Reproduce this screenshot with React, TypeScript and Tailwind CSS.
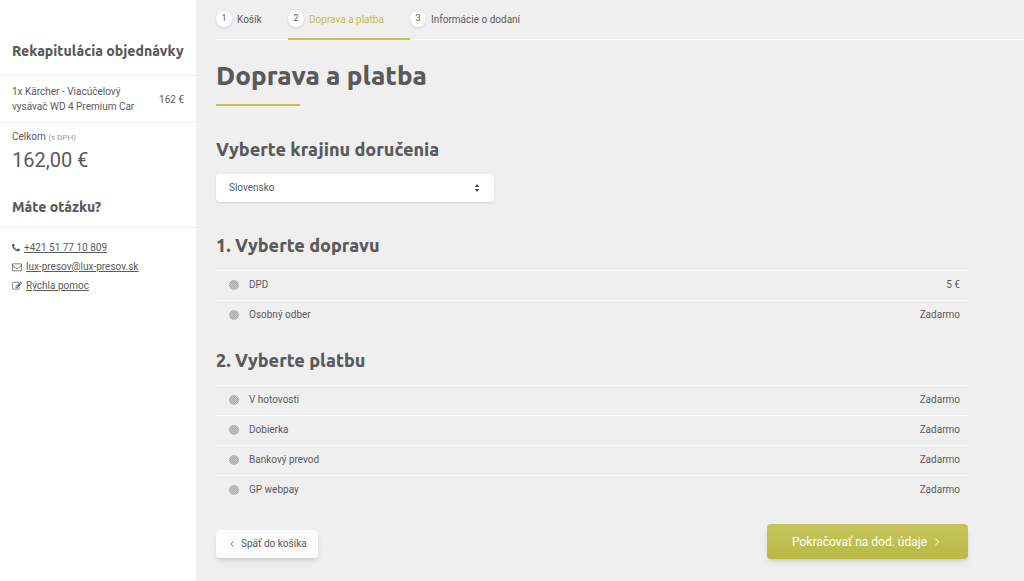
import { useState } from "react";
import { FiChevronLeft, FiChevronRight } from "react-icons/fi";

const steps = [
  { id: 1, title: "Košík", className: "w-[72px]" },
  { id: 2, title: "Doprava a platba", className: "w-[122px]" },
  { id: 3, title: "Informácie o dodaní", className: "" },
];

const shipping = [
  { id: "dpd", title: "DPD", price: "5 €" },
  { id: "pickup", title: "Osobný odber", price: "Zadarmo" },
];

const payment = [
  { id: "cash", title: "V hotovosti", price: "Zadarmo" },
  { id: "cod", title: "Dobierka", price: "Zadarmo" },
  { id: "transfer", title: "Bankový prevod", price: "Zadarmo" },
  { id: "webpay", title: "GP webpay", price: "Zadarmo" },
];

const contacts = [
  {
    id: "phone",
    title: "+421 51 77 10 809",
    href: "tel:+421517710809",
    iconClass: "w-2",
    viewBox: "192 256 1408 1408",
    path: "M1600 1240q0 27-10 70.5t-21 68.5q-21 50-122 106-94 51-186 51-27 0-53-3.5t-57.5-12.5-47-14.5-55.5-20.5-49-18q-98-35-175-83-127-79-264-216t-216-264q-48-77-83-175-3-9-18-49t-20.5-55.5-14.5-47-12.5-57.5-3.5-53q0-92 51-186 56-101 106-122 25-11 68.5-21t70.5-10q14 0 21 3 18 6 53 76 11 19 30 54t35 63.5 31 53.5q3 4 17.5 25t21.5 35.5 7 28.5q0 20-28.5 50t-62 55-62 53-28.5 46q0 9 5 22.5t8.5 20.5 14 24 11.5 19q76 137 174 235t235 174q2 1 19 11.5t24 14 20.5 8.5 22.5 5q18 0 46-28.5t53-62 55-62 50-28.5q14 0 28.5 7t35.5 21.5 25 17.5q25 15 53.5 31t63.5 35 54 30q70 35 76 53 3 7 3 21z",
  },
  {
    id: "mail",
    title: "lux-presov@lux-presov.sk",
    href: "mailto:lux-presov@lux-presov.sk",
    iconClass: "w-2.5",
    viewBox: "0 0 1792 1792",
    path: "M1664 1504v-768q-32 36-69 66-268 206-426 338-51 43-83 67t-86.5 48.5-102.5 24.5h-2q-48 0-102.5-24.5t-86.5-48.5-83-67q-158-132-426-338-37-30-69-66v768q0 13 9.5 22.5t22.5 9.5h1472q13 0 22.5-9.5t9.5-22.5zm0-1051v-24.5l-.5-13-3-12.5-5.5-9-9-7.5-14-2.5h-1472q-13 0-22.5 9.5t-9.5 22.5q0 168 147 284 193 152 401 317 6 5 35 29.5t46 37.5 44.5 31.5 50.5 27.5 43 9h2q20 0 43-9t50.5-27.5 44.5-31.5 46-37.5 35-29.5q208-165 401-317 54-43 100.5-115.5t46.5-131.5zm128-37v1088q0 66-47 113t-113 47h-1472q-66 0-113-47t-47-113v-1088q0-66 47-113t113-47h1472q66 0 113 47t47 113z",
  },
  {
    id: "help",
    title: "Rýchla pomoc",
    href: "#pomoc",
    iconClass: "w-2.5",
    viewBox: "0 0 1792 1792",
    path: "M888 1184l116-116-152-152-116 116v56h96v96h56zm440-720q-16-16-33 1l-350 350q-17 17-1 33t33-1l350-350q17-17 1-33zm80 594v190q0 119-84.5 203.5t-203.5 84.5h-832q-119 0-203.5-84.5t-84.5-203.5v-832q0-119 84.5-203.5t203.5-84.5h832q63 0 117 25 15 7 18 23 3 17-9 29l-49 49q-14 14-32 8-23-6-45-6h-832q-66 0-113 47t-47 113v832q0 66 47 113t113 47h832q66 0 113-47t47-113v-126q0-13 9-22l64-64q15-15 35-7t20 29zm-96-738l288 288-672 672h-288v-288zm444 132l-92 92-288-288 92-92q28-28 68-28t68 28l152 152q28 28 28 68t-28 68z",
  },
];

type Option = { id: string; title: string; price: string };

function OptionList({
  name,
  label,
  options,
}: {
  name: string;
  label: string;
  options: Option[];
}) {
  const [selected, setSelected] = useState("");

  return (
    <div role="radiogroup" aria-label={label}>
      {options.map((option) => (
        <label
          key={option.id}
          className="flex h-[30px] cursor-pointer items-center border-t border-[#fafafa] pr-2 pb-0.5 pl-[13px]"
        >
          <input
            type="radio"
            name={name}
            value={option.id}
            checked={selected === option.id}
            onChange={() => setSelected(option.id)}
            className="mr-2.5 size-2.5 appearance-none rounded-full bg-[#bababa] bg-[repeating-conic-gradient(#a8a8a8_0_25%,#c8c8c8_0_50%)] bg-size-[2px_2px] checked:bg-[#bfc04c] checked:bg-none"
          />
          <span className="flex-1">{option.title}</span>
          <span>{option.price}</span>
        </label>
      ))}
    </div>
  );
}

function Sidebar() {
  return (
    <aside className="w-49 shrink-0 bg-white">
      <h2 className="flex h-[76px] items-end border-b border-[#efefef] px-3 pb-3.5 font-[Ubuntu,'Noto_Sans',sans-serif] text-[14px] leading-5 font-extrabold whitespace-nowrap">
        Rekapitulácia objednávky
      </h2>
      <div className="flex h-[47px] items-center justify-between border-b border-[#efefef] px-3">
        <p className="w-32 leading-[15px]">
          1x Kärcher - Viacúčelový vysávač WD 4 Premium Car
        </p>
        <span>162 €</span>
      </div>
      <div className="px-3 pt-1.5">
        <p className="leading-4">
          Celkom <span className="text-[8px] text-[#9b9b9b]">(s DPH)</span>
        </p>
        <p className="text-[20px] leading-7">162,00 €</p>
      </div>
      <h2 className="mt-[23px] border-b border-[#efefef] px-3 pb-2.5 font-[Ubuntu,'Noto_Sans',sans-serif] text-[14px] leading-5 font-extrabold">
        Máte otázku?
      </h2>
      <ul className="px-3 pt-2.5">
        {contacts.map((contact) => (
          <li key={contact.id} className="flex h-[19px] items-center gap-1">
            <svg
              viewBox={contact.viewBox}
              className={`${contact.iconClass} shrink-0 fill-current`}
              aria-hidden="true"
            >
              <path d={contact.path} />
            </svg>
            <a href={contact.href} className="underline">
              {contact.title}
            </a>
          </li>
        ))}
      </ul>
    </aside>
  );
}

function Steps() {
  return (
    <nav aria-label="Objednávka" className="border-b border-[#fafafa]">
      <ol className="-mb-px flex h-10">
        {steps.map((step) => {
          const active = step.id === 2;
          return (
            <li
              key={step.id}
              aria-current={active ? "step" : undefined}
              className={`flex items-center gap-[5px] border-b-2 ${step.className} ${
                active ? "border-[#bfc04c]" : "border-transparent"
              }`}
            >
              <span className="flex size-4 items-center justify-center rounded-full bg-white text-[9px] shadow-sm">
                {step.id}
              </span>
              <a
                href={`#krok-${step.id}`}
                className={active ? "text-[#bfc04c]" : ""}
              >
                {step.title}
              </a>
            </li>
          );
        })}
      </ol>
    </nav>
  );
}

export default function App() {
  return (
    <div className="flex min-h-screen bg-[#efefef] font-[Roboto,sans-serif] text-[10px] text-[#5a5a5a]">
      <Sidebar />
      <main className="min-w-0 flex-1 pl-5">
        <Steps />
        <div className="mr-14">
          <h1 className="mt-4 font-[Ubuntu,'Noto_Sans',sans-serif] text-[26px] leading-10 font-extrabold">
            Doprava a platba
          </h1>
          <div className="mt-2 h-0.5 w-[84px] bg-[#bfc04c]" />

          <h2 className="mt-[27px] font-[Ubuntu,'Noto_Sans',sans-serif] text-[18px] leading-8 font-extrabold">
            <label htmlFor="country">Vyberte krajinu doručenia</label>
          </h2>
          <div className="relative mt-[9px] w-[278px]">
            <select
              id="country"
              className="h-7 w-full appearance-none rounded bg-white px-[13px] pb-0.5 shadow-sm"
            >
              <option>Slovensko</option>
            </select>
            <svg
              viewBox="0 0 6 8"
              className="pointer-events-none absolute top-2.5 right-3.5 h-2 w-1.5 fill-[#555555]"
              aria-hidden="true"
            >
              <path d="M3 0 5.5 3h-5zM3 8 .5 5h5z" />
            </svg>
          </div>

          <h2 className="mt-[27px] mb-[9px] font-[Ubuntu,'Noto_Sans',sans-serif] text-[18px] leading-8 font-extrabold">
            1. Vyberte dopravu
          </h2>
          <OptionList name="shipping" label="Doprava" options={shipping} />

          <h2 className="mt-3.5 mb-[9px] font-[Ubuntu,'Noto_Sans',sans-serif] text-[18px] leading-8 font-extrabold">
            2. Vyberte platbu
          </h2>
          <OptionList name="payment" label="Platba" options={payment} />

          <div className="mt-[19px] flex items-center justify-between">
            <button
              type="button"
              className="mt-1 flex h-7 items-center gap-1 rounded bg-[#fcfcfc] px-[11px] shadow-md"
            >
              <FiChevronLeft className="size-2.5" />
              Späť do košíka
            </button>
            <button
              type="button"
              className="flex h-[35px] w-[201px] items-center justify-center gap-1 rounded-sm bg-linear-to-b from-[#c6c55c] to-[#bab944] text-[12px] text-white shadow-md"
            >
              Pokračovať na dod. údaje
              <FiChevronRight className="size-3" />
            </button>
          </div>
        </div>
      </main>
    </div>
  );
}
